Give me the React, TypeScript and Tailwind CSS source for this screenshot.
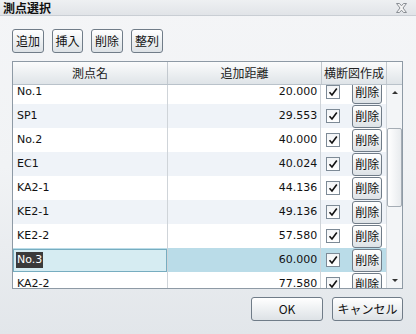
import React from "react";

const rows = [
  { name: "No.1", dist: "20.000" },
  { name: "SP1", dist: "29.553" },
  { name: "No.2", dist: "40.000" },
  { name: "EC1", dist: "40.024" },
  { name: "KA2-1", dist: "44.136" },
  { name: "KE2-1", dist: "49.136" },
  { name: "KE2-2", dist: "57.580" },
  { name: "No.3", dist: "60.000", selected: true },
  { name: "KA2-2", dist: "77.580" },
];

const jp = { fontFamily: '"Noto Sans CJK JP", "DejaVu Sans", sans-serif' };
const lat = { fontFamily: '"DejaVu Sans", "Noto Sans CJK JP", sans-serif' };

const Btn = ({ label, className = "" }: { label: string; className?: string }) => (
  <button
    style={jp}
    className={`flex items-center justify-center rounded-[3px] border border-[#707c88] bg-gradient-to-b from-[#ffffff] to-[#dde2e6] text-[12px] leading-none text-[#111] ${className}`}
  >
    {label}
  </button>
);

const Check = () => (
  <div className="flex h-[14px] w-[14px] items-center justify-center border border-[#7d8a96] bg-gradient-to-b from-[#f2f4f6] to-[#ffffff]">
    <svg width="10" height="10" viewBox="0 0 10 10">
      <path d="M1.5 5.2 L4 8 L8.8 1.5" fill="none" stroke="#111" strokeWidth="1.6" />
    </svg>
  </div>
);

const App = () => {
  return (
    <div className="flex h-[334px] w-[416px] flex-col bg-gradient-to-b from-[#f4f5f7] via-[#f1f3f5] to-[#e2e6ea]">
      <div className="flex h-[16px] items-center justify-between border-b border-[#c9ced4] bg-gradient-to-b from-[#eef0f2] to-[#e1e4e8] pl-[3px] pr-[9px]">
        <span style={jp} className="text-[12px] font-bold leading-none text-[#111]">
          測点選択
        </span>
        <svg width="11" height="10" viewBox="0 0 11 10">
          <path
            d="M0.5 0.5 H3.5 L5.5 2.8 L7.5 0.5 H10.5 L7 5 L10.5 9.5 H7.5 L5.5 7.2 L3.5 9.5 H0.5 L4 5 Z"
            fill="#f4f4f4"
            stroke="#8a8f95"
            strokeWidth="1"
          />
        </svg>
      </div>

      <div className="flex gap-[8px] pl-[12px] pt-[13px]">
        <Btn label="追加" className="h-[24px] w-[32px]" />
        <Btn label="挿入" className="h-[24px] w-[31px]" />
        <Btn label="削除" className="h-[24px] w-[32px]" />
        <Btn label="整列" className="h-[24px] w-[32px]" />
      </div>

      <div className="ml-[12px] mt-[8px] flex h-[228px] w-[391px] flex-col border border-[#8e9aa5] bg-white">
        <div
          style={jp}
          className="flex h-[23px] shrink-0 border-b border-[#b9c2ca] bg-gradient-to-b from-[#fbfcfc] to-[#dfe4e8] text-[12px] text-[#222]"
        >
          <div className="flex w-[155px] items-center justify-center border-r border-[#c3c9cf]">測点名</div>
          <div className="flex w-[154px] items-center justify-center border-r border-[#c3c9cf]">追加距離</div>
          <div className="flex w-[65px] items-center justify-center border-r border-[#c3c9cf]">横断図作成</div>
          <div className="flex-1" />
        </div>
        <div className="flex min-h-0 flex-1">
          <div className="w-[374px] overflow-hidden">
            <div className="-mt-[5px]">
              {rows.map((r, i) => (
                <div
                  key={r.name}
                  className={`flex h-[24px] ${
                    r.selected ? "bg-[#badce8]" : i % 2 === 1 ? "bg-[#eff3f8]" : "bg-white"
                  }`}
                >
                  <div className="flex w-[155px] items-center border-r border-[#cfd4d9]">
                    {r.selected ? (
                      <div className="flex h-[23px] w-[154px] items-center border border-[#77adc0] bg-[#d6ecf2] pl-[2px]">
                        <span style={lat} className="bg-[#3a3a3a] px-[1px] text-[11px] leading-[16px] text-white">
                          {r.name}
                        </span>
                      </div>
                    ) : (
                      <span style={lat} className="pl-[4px] text-[11px] text-[#111]">
                        {r.name}
                      </span>
                    )}
                  </div>
                  <div
                    style={lat}
                    className="flex w-[154px] items-center justify-end border-r border-[#cfd4d9] pr-[3px] text-[11px] text-[#111]"
                  >
                    {r.dist}
                  </div>
                  <div className="flex w-[65px] items-center gap-[12px] pl-[5px]">
                    <Check />
                    <Btn label="削除" className="h-[23px] w-[30px]" />
                  </div>
                </div>
              ))}
            </div>
          </div>
          <div className="flex w-[16px] flex-col items-center border-l border-[#d3d8dd] bg-[#f3f5f7]">
            <div className="mt-[6px] h-0 w-0 border-x-[3px] border-b-[3px] border-x-transparent border-b-[#333]" />
            <div className="mt-[34px] h-[79px] w-[15px] rounded-[2px] border border-[#a5adb5] bg-gradient-to-r from-[#ffffff] to-[#e8ebee]" />
            <div className="mt-auto mb-[6px] h-0 w-0 border-x-[3px] border-t-[3px] border-x-transparent border-t-[#333]" />
          </div>
        </div>
      </div>

      <div className="flex justify-end gap-[9px] pr-[13px] pt-[8px]">
        <Btn label="OK" className="h-[24px] w-[72px]" />
        <Btn label="キャンセル" className="h-[24px] w-[71px]" />
      </div>
    </div>
  );
};

export default App;
